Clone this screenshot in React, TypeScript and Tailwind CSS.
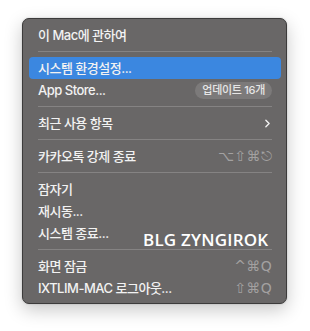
import { ChevronRight } from "lucide-react";

type Item = {
  label: string;
  shortcut?: string;
  badge?: string;
  submenu?: boolean;
  active?: boolean;
  sepAfter?: boolean;
};

const items: Item[] = [
  { label: "이 Mac에 관하여", sepAfter: true },
  { label: "시스템 환경설정...", active: true },
  { label: "App Store...", badge: "업데이트 16개", sepAfter: true },
  { label: "최근 사용 항목", submenu: true, sepAfter: true },
  { label: "카카오톡 강제 종료", shortcut: "⌥⇧⌘⎋", sepAfter: true },
  { label: "잠자기" },
  { label: "재시동..." },
  { label: "시스템 종료...", sepAfter: true },
  { label: "화면 잠금", shortcut: "^⌘Q" },
  { label: "IXTLIM-MAC 로그아웃...", shortcut: "⇧⌘Q" },
];

function MenuRow({ item }: { item: Item }) {
  return (
    <>
      <li
        className={`${item.active ? "bg-[#3b87e0]" : ""} mx-[6px] mr-[5px] h-[22px] flex items-center justify-between pl-[9px] pr-[9px] rounded-[4px] text-[13px] font-medium text-[#f2f2f2]`}
      >
        <span className="leading-none tracking-[-0.5px]">{item.label}</span>
        {item.badge && (
          <span className="h-[17px] px-[7px] flex items-center rounded-full bg-[#7c7a7a] text-[11px] text-[#e6e6e6] leading-none tracking-[-0.3px]">
            {item.badge}
          </span>
        )}
        {item.submenu && (
          <ChevronRight size={13} strokeWidth={2.6} className="text-[#f0f0f0] -mr-[2px]" />
        )}
        {item.shortcut && (
          <span className="text-[14px] font-normal text-[#a3a1a1] tracking-[0.3px] leading-none font-['DejaVu_Sans',sans-serif]">
            {item.shortcut}
          </span>
        )}
      </li>
      {item.sepAfter && (
        <li className="h-[11px] flex items-center ml-[15px] mr-[14px]">
          <div className="h-px w-full bg-[#858383]" />
        </li>
      )}
    </>
  );
}

export default function App() {
  return (
    <div className="w-[310px] h-[331px] bg-white pt-[18px] pl-[22px] font-['Inter','Noto_Sans_CJK_KR',sans-serif]">
      <div className="relative w-[265px] h-[286px] rounded-[7px] bg-[#696767] border border-[#3c3b3b] shadow-[0_6px_18px_rgba(0,0,0,0.22),0_0_2px_rgba(0,0,0,0.2)]">
        <ul className="pt-[5px]">
          {items.map((item) => (
            <MenuRow key={item.label} item={item} />
          ))}
        </ul>
        <span className="absolute left-[120px] top-[208px] text-[17px] font-semibold text-white tracking-[0.2px] font-['Open_Sans','Noto_Sans',sans-serif]">
          BLG ZYNGIROK
        </span>
      </div>
    </div>
  );
}
